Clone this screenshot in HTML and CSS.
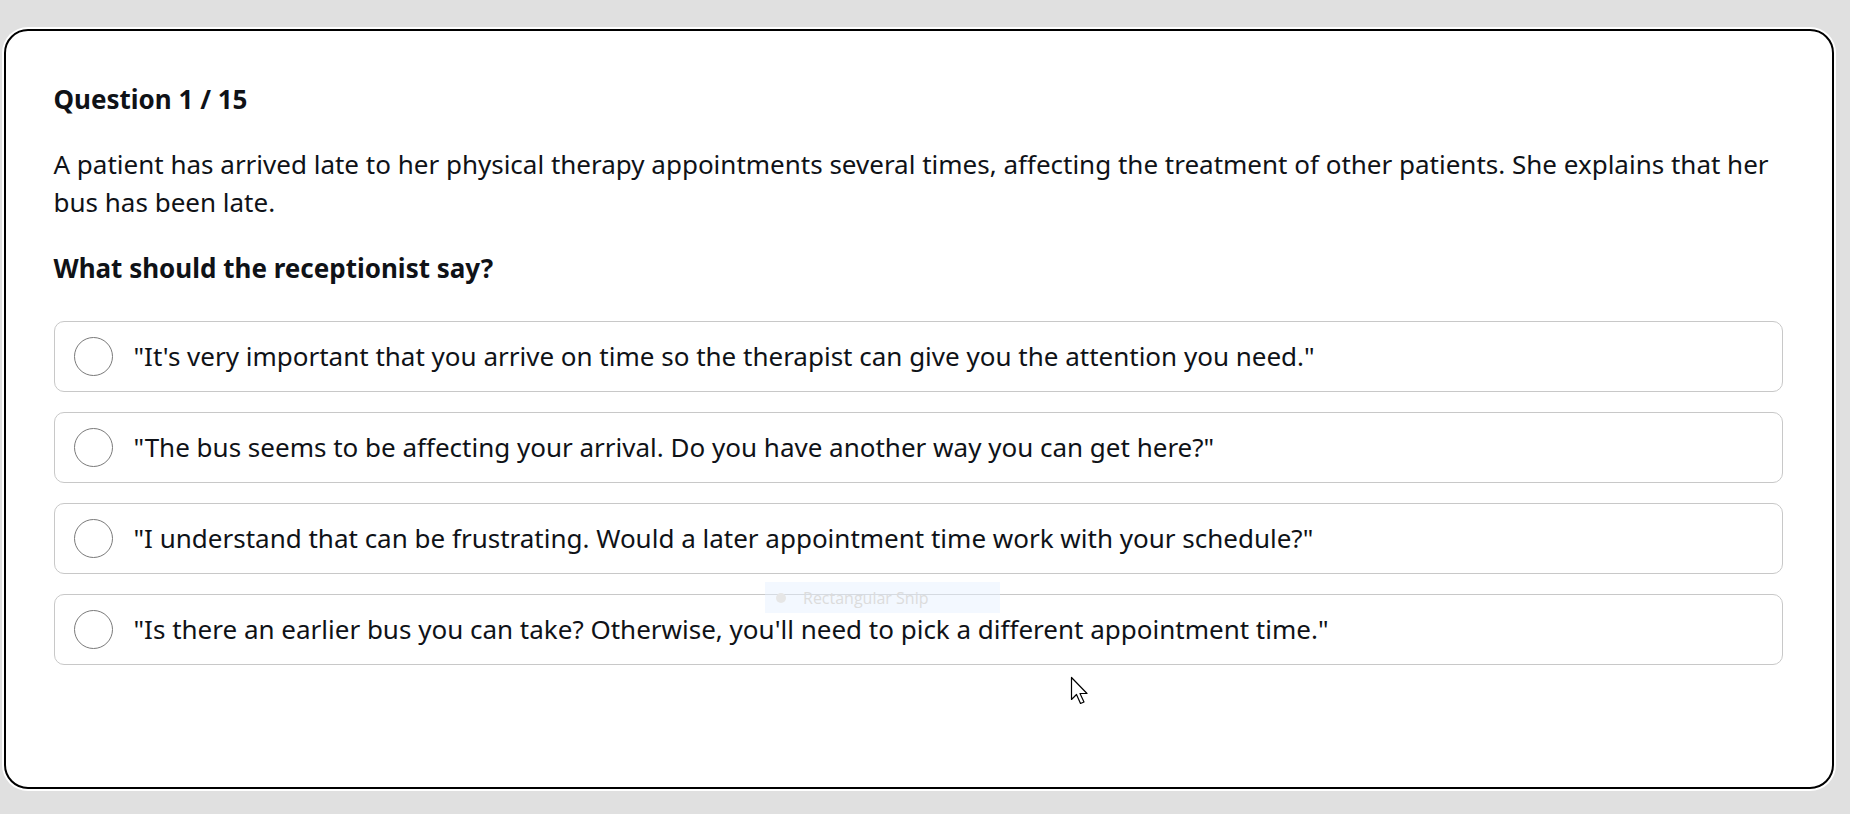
FILE: index.html
```html
<!DOCTYPE html>
<html lang="en">
<head>
<meta charset="utf-8">
<title>Question 1 / 15</title>
<link rel="stylesheet" href="styles.css">
</head>
<body>
<main class="card">
  <h2 class="q-count">Question 1 / 15</h2>
  <p class="q-text">A patient has arrived late to her physical therapy appointments several times, affecting the treatment of other patients. She explains that her bus has been late.</p>
  <h3 class="q-ask">What should the receptionist say?</h3>
  <ul class="options">
    <li class="option"><span class="radio"></span><span class="opt-text">"It's very important that you arrive on time so the therapist can give you the attention you need."</span></li>
    <li class="option"><span class="radio"></span><span class="opt-text">"The bus seems to be affecting your arrival. Do you have another way you can get here?"</span></li>
    <li class="option"><span class="radio"></span><span class="opt-text">"I understand that can be frustrating. Would a later appointment time work with your schedule?"</span></li>
    <li class="option"><span class="radio"></span><span class="opt-text">"Is there an earlier bus you can take? Otherwise, you'll need to pick a different appointment time."</span></li>
  </ul>
  <div class="snip"><span class="snip-dot"></span><span class="snip-label">Rectangular Snip</span></div>
  <svg class="cursor" width="22" height="30" viewBox="0 0 22 30" aria-hidden="true">
    <path d="M1.5 1.5 L1.5 23.5 L6.5 18.5 L10.5 27.5 L14 26 L10 17.5 L17 17.5 Z" fill="#fff" stroke="#000" stroke-width="1.2" stroke-linejoin="round"/>
  </svg>
</main>
</body>
</html>
```
FILE: styles.css
```css
html, body {
  margin: 0;
  padding: 0;
}
body {
  background: #e0e0e0;
  font-family: "Noto Sans", "Open Sans", sans-serif;
  color: #0f1217;
  height: 814px;
  overflow: hidden;
}
.card {
  position: relative;
  box-sizing: border-box;
  margin: 29px 16px 0 4px;
  height: 760px;
  background: #fff;
  border: 2.5px solid #000;
  border-radius: 24px;
  box-shadow: 0 0 0 2px #fff;
  padding: 49.5px 47.5px 0 47.5px;
}
.q-count {
  margin: 0;
  font-size: 26px;
  line-height: 36px;
  font-weight: 700;
}
.q-text {
  margin: 28px 0 0 0;
  font-size: 26px;
  line-height: 38px;
  font-weight: 400;
}
.q-ask {
  margin: 29px 0 0 0;
  font-size: 26px;
  line-height: 36px;
  font-weight: 700;
}
.options {
  list-style: none;
  margin: 35px 2px 0 0;
  padding: 0;
  display: flex;
  flex-direction: column;
  gap: 20px;
}
.option {
  box-sizing: border-box;
  height: 71px;
  border: 1px solid #c8c8c8;
  border-radius: 10px;
  display: flex;
  align-items: center;
  padding-left: 19px;
  gap: 21px;
  font-size: 26px;
}
.radio {
  box-sizing: border-box;
  width: 39px;
  height: 39px;
  border: 1.5px solid #7a7a7a;
  border-radius: 50%;
  flex: none;
}
.snip {
  position: absolute;
  left: 759px;
  top: 551px;
  width: 235px;
  height: 31px;
  background: rgba(228, 240, 255, 0.45);
  display: flex;
  align-items: center;
  font-family: "Open Sans", "Noto Sans", sans-serif;
  font-size: 16px;
  color: #dcdcdc;
}
.snip-dot {
  width: 10px;
  height: 10px;
  border-radius: 50%;
  background: #e6e6e6;
  margin: 0 17px 0 11px;
}
.cursor {
  position: absolute;
  left: 1064px;
  top: 645px;
}
```
